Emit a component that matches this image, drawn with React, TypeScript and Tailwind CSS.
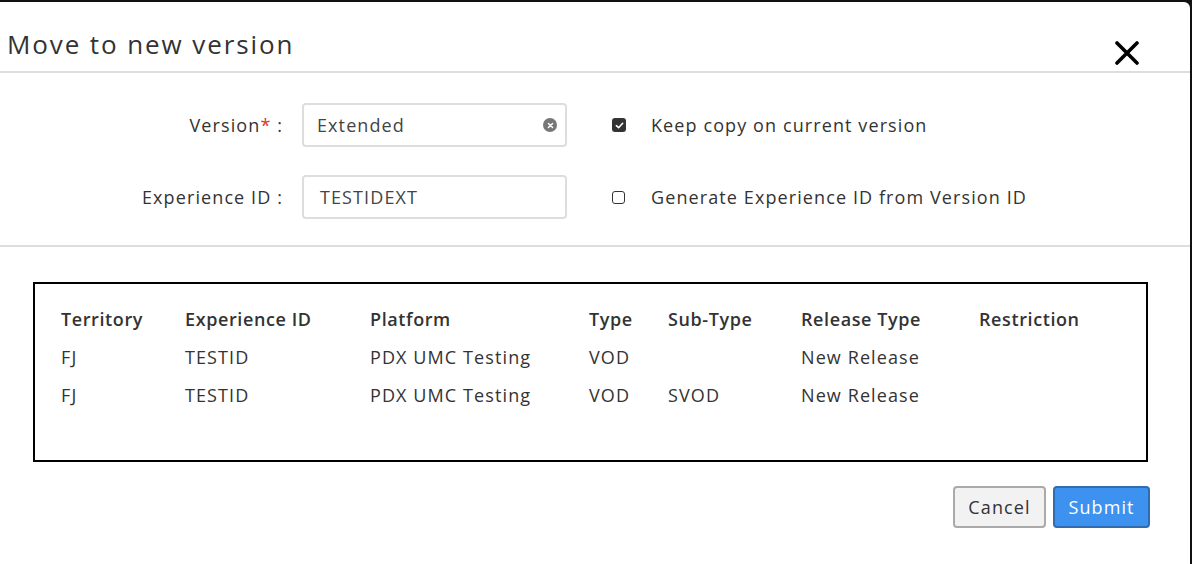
const columns = [
  { key: "territory", label: "Territory", width: "w-[124px]" },
  { key: "experienceId", label: "Experience ID", width: "w-[185px]" },
  { key: "platform", label: "Platform", width: "w-[219px]" },
  { key: "type", label: "Type", width: "w-[79px]" },
  { key: "subType", label: "Sub-Type", width: "w-[133px]" },
  { key: "releaseType", label: "Release Type", width: "w-[178px]" },
  { key: "restriction", label: "Restriction", width: "flex-1" },
];

const rows: Record<string, string>[] = [
  { territory: "FJ", experienceId: "TESTID", platform: "PDX UMC Testing", type: "VOD", subType: "", releaseType: "New Release", restriction: "" },
  { territory: "FJ", experienceId: "TESTID", platform: "PDX UMC Testing", type: "VOD", subType: "SVOD", releaseType: "New Release", restriction: "" },
];

function Checkbox({ checked }: { checked: boolean }) {
  return checked ? (
    <span className="grid size-[14px] place-items-center rounded-[3px] bg-[#333]">
      <svg viewBox="0 0 10 10" className="size-[9px]">
        <path d="M1.5 5.2 L4 7.5 L8.5 2.5" fill="none" stroke="white" strokeWidth="1.8" strokeLinecap="round" strokeLinejoin="round" />
      </svg>
    </span>
  ) : (
    <span className="block size-[13px] rounded-[3px] border border-[#333] bg-white" />
  );
}

export default function App() {
  return (
    <div className="h-[564px] w-[1192px] overflow-hidden bg-[#111] pt-[2px] pr-[2px] font-['Open_Sans',sans-serif] text-[18px] tracking-[1.1px] text-[#333]">
      <div className="h-full rounded-tr-[6px] bg-white">
        <div className="flex h-[71px] items-end justify-between border-b-2 border-[#ddd] pb-[14px] pl-[7px] pr-[51px]">
          <h1 className="text-[26px] leading-none tracking-[1.9px] text-[#333]">Move to new version</h1>
          <svg viewBox="0 0 24 24" className="mb-[-8px] size-[24px]">
            <path d="M2 2 L22 22 M22 2 L2 22" stroke="black" strokeWidth="3.6" strokeLinecap="round" />
          </svg>
        </div>

        <div className="flex flex-col gap-[28px] border-b-2 border-[#ddd] pb-[26px] pt-[30px]">
          <div className="flex items-center">
            <label className="w-[283px] text-right">
              Version<span className="text-[#e0322b]">*</span> :
            </label>
            <div className="ml-[19px] flex h-[44px] w-[265px] items-center justify-between rounded-[4px] border-2 border-[#ddd] pl-[13px] pr-[8px] text-[#444]">
              <span>Extended</span>
              <span className="grid size-[14px] place-items-center rounded-full bg-[#777]">
                <svg viewBox="0 0 10 10" className="size-[7px]">
                  <path d="M2 2 L8 8 M8 2 L2 8" stroke="white" strokeWidth="2" strokeLinecap="round" />
                </svg>
              </span>
            </div>
            <div className="ml-[45px] flex items-center gap-[25px]">
              <Checkbox checked />
              <span>Keep copy on current version</span>
            </div>
          </div>
          <div className="flex items-center">
            <label className="w-[283px] text-right">Experience ID :</label>
            <div className="ml-[19px] flex h-[44px] w-[265px] items-center rounded-[4px] border-2 border-[#ddd] pl-[16px] text-[#444]">
              TESTIDEXT
            </div>
            <div className="ml-[45px] flex items-center gap-[26px]">
              <Checkbox checked={false} />
              <span>Generate Experience ID from Version ID</span>
            </div>
          </div>
        </div>

        <div className="px-[33px] pt-[35px]">
          <div className="h-[180px] w-[1115px] border-2 border-black px-[26px] pt-[17px]">
            <div className="flex h-[37px] items-center font-semibold tracking-[0.6px]">
              {columns.map((c) => (
                <div key={c.key} className={c.width}>{c.label}</div>
              ))}
            </div>
            {rows.map((r, i) => (
              <div key={i} className="flex h-[38px] items-center">
                {columns.map((c) => (
                  <div key={c.key} className={c.width}>{r[c.key]}</div>
                ))}
              </div>
            ))}
          </div>
          <div className="mt-[24px] flex justify-end gap-[7px] pr-[7px]">
            <button className="h-[42px] w-[93px] rounded-[4px] border-2 border-[#aaa] bg-[#f2f2f2] text-[#333]">Cancel</button>
            <button className="h-[42px] w-[97px] rounded-[4px] border-2 border-[#2f6db0] bg-[#3d92f0] text-white">Submit</button>
          </div>
        </div>
      </div>
    </div>
  );
}
